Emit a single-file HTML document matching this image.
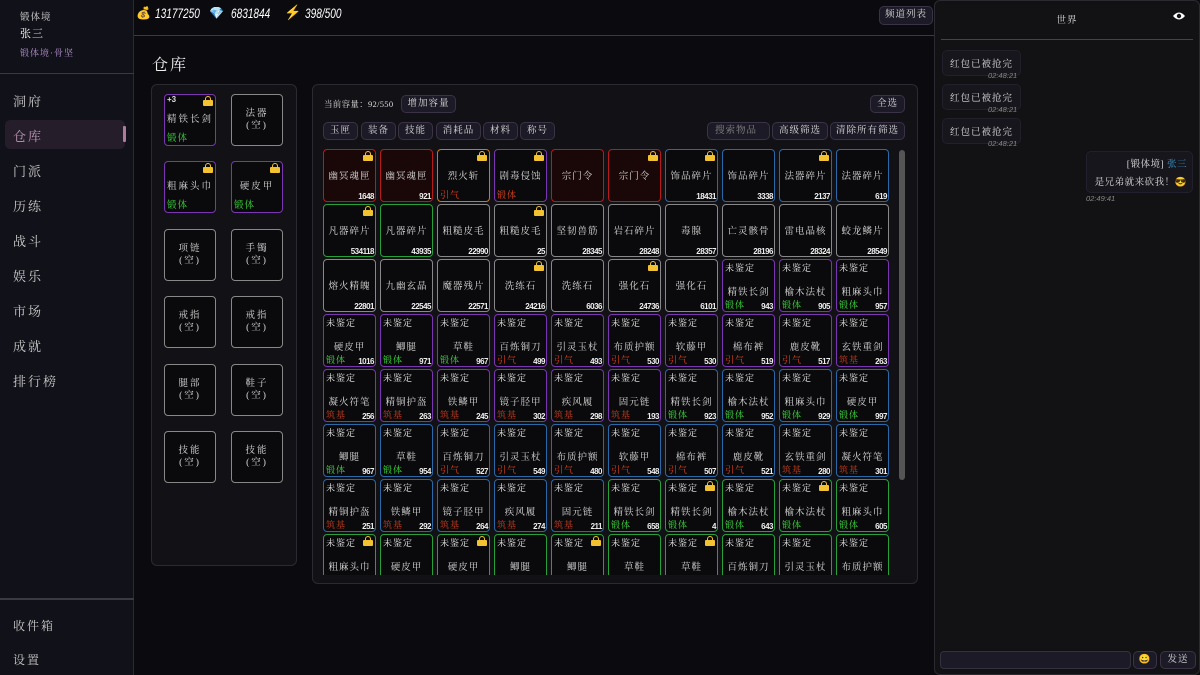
<!DOCTYPE html>
<html><head><meta charset="utf-8"><style>
*{box-sizing:border-box;margin:0;padding:0}
body{width:1200px;height:675px;overflow:hidden;background:#0b0b0f;font-family:"Liberation Serif","Noto Serif CJK SC",serif;color:#ddd;position:relative}
.abs{position:absolute}
#side{left:0;top:0;width:134px;height:675px;background:#111119;border-right:1px solid #2a2a33}
.nav{position:absolute;left:13px;font-size:13px;color:#c8c8c8;letter-spacing:2px}
#chat{left:934px;top:0;width:266px;height:675px;background:#121215;border:1px solid #2a2a30;border-radius:6px}
.btn{position:absolute;background:#1c1a26;border:1px solid #3a3345;border-radius:5px;font-size:9.5px;color:#ddd;text-align:center;letter-spacing:1px;white-space:nowrap}
.panel{position:absolute;background:#111116;border:1px solid #2a2a32;border-radius:6px}
.eq{position:absolute;width:52px;height:52px;border:1.5px solid #888;border-radius:4px;background:#0a0a0c;font-size:9.5px;text-align:center;color:#ddd;display:flex;align-items:center;justify-content:center;line-height:1.3;letter-spacing:2px}
.eq.p{border-color:#7a35b0}
#grid{left:323px;top:149px;width:568px;height:426px;overflow:hidden}
.c{position:absolute;width:53px;height:53px;border:1.5px solid #888;border-radius:4px;background:#0a0a0c;font-size:9px}
.c .n{position:absolute;left:0;right:0;top:18px;text-align:center;color:#ddd;font-size:9.5px;letter-spacing:1px;white-space:nowrap}
.c .u{position:absolute;left:2px;top:1px;color:#eee;letter-spacing:1px}
.c .u+.n{top:24px}
.c .q{position:absolute;right:1px;bottom:0;font-size:8px;font-family:"Liberation Sans",sans-serif;font-weight:bold;color:#eee;letter-spacing:-.5px}
.c .lv{position:absolute;left:2px;bottom:0;font-size:9px;letter-spacing:1px}
.g1{color:#3ddc3d}.g2{color:#e8421a}.g3{color:#d2401e}
.lk{position:absolute;right:2px;top:1px;width:10px;height:10px}
.lk::before{content:"";position:absolute;left:2px;top:0;width:6px;height:6px;border:1.5px solid #f2c230;border-bottom:none;border-radius:3px 3px 0 0;box-sizing:border-box}
.lk::after{content:"";position:absolute;left:0;top:4px;width:10px;height:6px;background:#f2c230;border-radius:1px}
.r{border-color:#b81a1a;background:#1a0808}.o{border-color:#c87a20}.p{border-color:#7a35b0}.b{border-color:#2a68a8}.g{border-color:#27a03a}
.bub{position:absolute;background:#17161c;border:1px solid #22202a;border-radius:5px;font-size:9.5px;color:#ddd;padding:5px 7px;letter-spacing:1px;white-space:nowrap}
.ts{position:absolute;font-size:7.5px;color:#888;font-family:"Liberation Sans",sans-serif;font-style:italic}
.num{position:absolute;top:5px;font-size:14px;font-style:italic;color:#fff;font-family:'Liberation Sans',sans-serif;transform:scaleX(.72);transform-origin:left top}
</style></head><body>
<div id="side" class="abs">
<div class="abs" style="left:20px;top:9px;font-size:9.5px;color:#ddd;letter-spacing:1px">锻体境</div>
<div class="abs" style="left:20px;top:25px;font-size:11px;color:#fff;letter-spacing:1px">张三</div>
<div class="abs" style="left:20px;top:46px;font-size:9px;color:#b090c8;letter-spacing:1px">锻体境·骨坚</div>
<div class="abs" style="left:0;top:73px;width:134px;height:1px;background:#3a3a44"></div>
<div class="abs" style="left:5px;top:120px;width:120px;height:29px;background:#251d2a;border-radius:5px"></div>
<div class="abs" style="left:123px;top:126px;width:3px;height:16px;background:#b07aa0;border-radius:1px"></div>
<div class="nav" style="top:91px">洞府</div>
<div class="nav" style="top:126px;color:#c09ab8">仓库</div>
<div class="nav" style="top:161px">门派</div>
<div class="nav" style="top:196px">历练</div>
<div class="nav" style="top:231px">战斗</div>
<div class="nav" style="top:266px">娱乐</div>
<div class="nav" style="top:301px">市场</div>
<div class="nav" style="top:336px">成就</div>
<div class="nav" style="top:371px">排行榜</div>
<div class="abs" style="left:0;top:598px;width:134px;height:2px;background:#3a3a44"></div>
<div class="nav" style="top:617px;font-size:12px">收件箱</div>
<div class="nav" style="top:651px;font-size:12px">设置</div>
</div>
<div class="abs" style="left:134px;top:35px;width:800px;height:1px;background:#3a3a44"></div>
<div class="abs" style="left:136px;top:6px;font-size:12px">💰</div>
<div class="num" style="left:155px">13177250</div>
<div class="abs" style="left:209px;top:6px;font-size:12px">💎</div>
<div class="num" style="left:231px">6831844</div>
<div class="abs" style="left:284px;top:5px;font-size:14px;color:#f5c020">⚡</div>
<div class="num" style="left:305px">398/500</div>
<div class="btn" style="left:879px;top:6px;width:54px;height:19px;line-height:17px">频道列表</div>
<div class="abs" style="left:152px;top:52px;font-size:16px;color:#eee;letter-spacing:2px">仓库</div>

<div class="panel" style="left:151px;top:84px;width:146px;height:482px"></div>
<div class="eq p" style="left:164px;top:94px"><span style="position:absolute;left:2px;top:0;font-size:8px;font-family:'Liberation Sans';font-weight:bold;letter-spacing:0">+3</span><span class="lk"></span>精铁长剑<span class="g1" style="position:absolute;left:2px;bottom:0;letter-spacing:1px">锻体</span></div>
<div class="eq" style="left:231px;top:94px">法器<br>(空)</div>
<div class="eq p" style="left:164px;top:161px"><span class="lk"></span>粗麻头巾<span class="g1" style="position:absolute;left:2px;bottom:0;letter-spacing:1px">锻体</span></div>
<div class="eq p" style="left:231px;top:161px"><span class="lk"></span>硬皮甲<span class="g1" style="position:absolute;left:2px;bottom:0;letter-spacing:1px">锻体</span></div>
<div class="eq" style="left:164px;top:229px">项链<br>(空)</div>
<div class="eq" style="left:231px;top:229px">手镯<br>(空)</div>
<div class="eq" style="left:164px;top:296px">戒指<br>(空)</div>
<div class="eq" style="left:231px;top:296px">戒指<br>(空)</div>
<div class="eq" style="left:164px;top:364px">腿部<br>(空)</div>
<div class="eq" style="left:231px;top:364px">鞋子<br>(空)</div>
<div class="eq" style="left:164px;top:431px">技能<br>(空)</div>
<div class="eq" style="left:231px;top:431px">技能<br>(空)</div>

<div class="panel" style="left:312px;top:84px;width:606px;height:500px"></div>
<div class="abs" style="left:324px;top:98px;font-size:8.5px;letter-spacing:.3px;white-space:nowrap">当前容量：92/550</div>
<div class="btn" style="left:401px;top:95px;width:55px;height:18px;line-height:16px">增加容量</div>
<div class="btn" style="left:870px;top:95px;width:35px;height:18px;line-height:16px">全选</div>
<div class="btn" style="left:323px;top:122px;width:35px;height:18px;line-height:16px">玉匣</div>
<div class="btn" style="left:361px;top:122px;width:35px;height:18px;line-height:16px">装备</div>
<div class="btn" style="left:398px;top:122px;width:35px;height:18px;line-height:16px">技能</div>
<div class="btn" style="left:436px;top:122px;width:45px;height:18px;line-height:16px">消耗品</div>
<div class="btn" style="left:483px;top:122px;width:35px;height:18px;line-height:16px">材料</div>
<div class="btn" style="left:520px;top:122px;width:35px;height:18px;line-height:16px">称号</div>
<div class="btn" style="left:707px;top:122px;width:63px;height:18px;line-height:16px;color:#888;text-align:left;padding-left:7px">搜索物品</div>
<div class="btn" style="left:772px;top:122px;width:56px;height:18px;line-height:16px">高级筛选</div>
<div class="btn" style="left:830px;top:122px;width:75px;height:18px;line-height:16px">清除所有筛选</div>
<div class="abs" style="left:899px;top:150px;width:6px;height:330px;background:#555;border-radius:3px"></div>

<div id="grid" class="abs">
<div class="c r" style="left:0;top:0"><span class="lk"></span><span class="n">幽冥魂匣</span><span class="q">1648</span></div>
<div class="c r" style="left:57px;top:0"><span class="n">幽冥魂匣</span><span class="q">921</span></div>
<div class="c o" style="left:114px;top:0"><span class="lk"></span><span class="n">烈火斩</span><span class="lv g2">引气</span></div>
<div class="c p" style="left:171px;top:0"><span class="lk"></span><span class="n">剧毒侵蚀</span><span class="lv g2">锻体</span></div>
<div class="c r" style="left:228px;top:0"><span class="n">宗门令</span></div>
<div class="c r" style="left:285px;top:0"><span class="lk"></span><span class="n">宗门令</span></div>
<div class="c b" style="left:342px;top:0"><span class="lk"></span><span class="n">饰品碎片</span><span class="q">18431</span></div>
<div class="c b" style="left:399px;top:0"><span class="n">饰品碎片</span><span class="q">3338</span></div>
<div class="c b" style="left:456px;top:0"><span class="lk"></span><span class="n">法器碎片</span><span class="q">2137</span></div>
<div class="c b" style="left:513px;top:0"><span class="n">法器碎片</span><span class="q">619</span></div>
<div class="c g" style="left:0;top:55px"><span class="lk"></span><span class="n">凡器碎片</span><span class="q">534118</span></div>
<div class="c g" style="left:57px;top:55px"><span class="n">凡器碎片</span><span class="q">43935</span></div>
<div class="c" style="left:114px;top:55px"><span class="n">粗糙皮毛</span><span class="q">22990</span></div>
<div class="c" style="left:171px;top:55px"><span class="lk"></span><span class="n">粗糙皮毛</span><span class="q">25</span></div>
<div class="c" style="left:228px;top:55px"><span class="n">坚韧兽筋</span><span class="q">28345</span></div>
<div class="c" style="left:285px;top:55px"><span class="n">岩石碎片</span><span class="q">28248</span></div>
<div class="c" style="left:342px;top:55px"><span class="n">毒腺</span><span class="q">28357</span></div>
<div class="c" style="left:399px;top:55px"><span class="n">亡灵骸骨</span><span class="q">28196</span></div>
<div class="c" style="left:456px;top:55px"><span class="n">雷电晶核</span><span class="q">28324</span></div>
<div class="c" style="left:513px;top:55px"><span class="n">蛟龙鳞片</span><span class="q">28549</span></div>
<div class="c" style="left:0;top:110px"><span class="n">熔火精魄</span><span class="q">22801</span></div>
<div class="c" style="left:57px;top:110px"><span class="n">九幽玄晶</span><span class="q">22545</span></div>
<div class="c" style="left:114px;top:110px"><span class="n">魔器残片</span><span class="q">22571</span></div>
<div class="c" style="left:171px;top:110px"><span class="lk"></span><span class="n">洗练石</span><span class="q">24216</span></div>
<div class="c" style="left:228px;top:110px"><span class="n">洗练石</span><span class="q">6036</span></div>
<div class="c" style="left:285px;top:110px"><span class="lk"></span><span class="n">强化石</span><span class="q">24736</span></div>
<div class="c" style="left:342px;top:110px"><span class="n">强化石</span><span class="q">6101</span></div>
<div class="c p" style="left:399px;top:110px"><span class="u">未鉴定</span><span class="n">精铁长剑</span><span class="lv g1">锻体</span><span class="q">943</span></div>
<div class="c p" style="left:456px;top:110px"><span class="u">未鉴定</span><span class="n">榆木法杖</span><span class="lv g1">锻体</span><span class="q">905</span></div>
<div class="c p" style="left:513px;top:110px"><span class="u">未鉴定</span><span class="n">粗麻头巾</span><span class="lv g1">锻体</span><span class="q">957</span></div>
<div class="c p" style="left:0;top:165px"><span class="u">未鉴定</span><span class="n">硬皮甲</span><span class="lv g1">锻体</span><span class="q">1016</span></div>
<div class="c p" style="left:57px;top:165px"><span class="u">未鉴定</span><span class="n">鲫腿</span><span class="lv g1">锻体</span><span class="q">971</span></div>
<div class="c p" style="left:114px;top:165px"><span class="u">未鉴定</span><span class="n">草鞋</span><span class="lv g1">锻体</span><span class="q">967</span></div>
<div class="c p" style="left:171px;top:165px"><span class="u">未鉴定</span><span class="n">百炼铜刀</span><span class="lv g2">引气</span><span class="q">499</span></div>
<div class="c p" style="left:228px;top:165px"><span class="u">未鉴定</span><span class="n">引灵玉杖</span><span class="lv g2">引气</span><span class="q">493</span></div>
<div class="c p" style="left:285px;top:165px"><span class="u">未鉴定</span><span class="n">布质护额</span><span class="lv g2">引气</span><span class="q">530</span></div>
<div class="c p" style="left:342px;top:165px"><span class="u">未鉴定</span><span class="n">软藤甲</span><span class="lv g2">引气</span><span class="q">530</span></div>
<div class="c p" style="left:399px;top:165px"><span class="u">未鉴定</span><span class="n">棉布裤</span><span class="lv g2">引气</span><span class="q">519</span></div>
<div class="c p" style="left:456px;top:165px"><span class="u">未鉴定</span><span class="n">鹿皮靴</span><span class="lv g2">引气</span><span class="q">517</span></div>
<div class="c p" style="left:513px;top:165px"><span class="u">未鉴定</span><span class="n">玄铁重剑</span><span class="lv g3">筑基</span><span class="q">263</span></div>
<div class="c p" style="left:0;top:220px"><span class="u">未鉴定</span><span class="n">凝火符笔</span><span class="lv g3">筑基</span><span class="q">256</span></div>
<div class="c p" style="left:57px;top:220px"><span class="u">未鉴定</span><span class="n">精铜护盔</span><span class="lv g3">筑基</span><span class="q">263</span></div>
<div class="c p" style="left:114px;top:220px"><span class="u">未鉴定</span><span class="n">铁鳞甲</span><span class="lv g3">筑基</span><span class="q">245</span></div>
<div class="c p" style="left:171px;top:220px"><span class="u">未鉴定</span><span class="n">镜子胫甲</span><span class="lv g3">筑基</span><span class="q">302</span></div>
<div class="c p" style="left:228px;top:220px"><span class="u">未鉴定</span><span class="n">疾风履</span><span class="lv g3">筑基</span><span class="q">298</span></div>
<div class="c p" style="left:285px;top:220px"><span class="u">未鉴定</span><span class="n">固元链</span><span class="lv g3">筑基</span><span class="q">193</span></div>
<div class="c b" style="left:342px;top:220px"><span class="u">未鉴定</span><span class="n">精铁长剑</span><span class="lv g1">锻体</span><span class="q">923</span></div>
<div class="c b" style="left:399px;top:220px"><span class="u">未鉴定</span><span class="n">榆木法杖</span><span class="lv g1">锻体</span><span class="q">952</span></div>
<div class="c b" style="left:456px;top:220px"><span class="u">未鉴定</span><span class="n">粗麻头巾</span><span class="lv g1">锻体</span><span class="q">929</span></div>
<div class="c b" style="left:513px;top:220px"><span class="u">未鉴定</span><span class="n">硬皮甲</span><span class="lv g1">锻体</span><span class="q">997</span></div>
<div class="c b" style="left:0;top:275px"><span class="u">未鉴定</span><span class="n">鲫腿</span><span class="lv g1">锻体</span><span class="q">967</span></div>
<div class="c b" style="left:57px;top:275px"><span class="u">未鉴定</span><span class="n">草鞋</span><span class="lv g1">锻体</span><span class="q">954</span></div>
<div class="c b" style="left:114px;top:275px"><span class="u">未鉴定</span><span class="n">百炼铜刀</span><span class="lv g2">引气</span><span class="q">527</span></div>
<div class="c b" style="left:171px;top:275px"><span class="u">未鉴定</span><span class="n">引灵玉杖</span><span class="lv g2">引气</span><span class="q">549</span></div>
<div class="c b" style="left:228px;top:275px"><span class="u">未鉴定</span><span class="n">布质护额</span><span class="lv g2">引气</span><span class="q">480</span></div>
<div class="c b" style="left:285px;top:275px"><span class="u">未鉴定</span><span class="n">软藤甲</span><span class="lv g2">引气</span><span class="q">548</span></div>
<div class="c b" style="left:342px;top:275px"><span class="u">未鉴定</span><span class="n">棉布裤</span><span class="lv g2">引气</span><span class="q">507</span></div>
<div class="c b" style="left:399px;top:275px"><span class="u">未鉴定</span><span class="n">鹿皮靴</span><span class="lv g2">引气</span><span class="q">521</span></div>
<div class="c b" style="left:456px;top:275px"><span class="u">未鉴定</span><span class="n">玄铁重剑</span><span class="lv g3">筑基</span><span class="q">280</span></div>
<div class="c b" style="left:513px;top:275px"><span class="u">未鉴定</span><span class="n">凝火符笔</span><span class="lv g3">筑基</span><span class="q">301</span></div>
<div class="c b" style="left:0;top:330px"><span class="u">未鉴定</span><span class="n">精铜护盔</span><span class="lv g3">筑基</span><span class="q">251</span></div>
<div class="c b" style="left:57px;top:330px"><span class="u">未鉴定</span><span class="n">铁鳞甲</span><span class="lv g3">筑基</span><span class="q">292</span></div>
<div class="c b" style="left:114px;top:330px"><span class="u">未鉴定</span><span class="n">镜子胫甲</span><span class="lv g3">筑基</span><span class="q">264</span></div>
<div class="c b" style="left:171px;top:330px"><span class="u">未鉴定</span><span class="n">疾风履</span><span class="lv g3">筑基</span><span class="q">274</span></div>
<div class="c b" style="left:228px;top:330px"><span class="u">未鉴定</span><span class="n">固元链</span><span class="lv g3">筑基</span><span class="q">211</span></div>
<div class="c g" style="left:285px;top:330px"><span class="u">未鉴定</span><span class="n">精铁长剑</span><span class="lv g1">锻体</span><span class="q">658</span></div>
<div class="c g" style="left:342px;top:330px"><span class="lk"></span><span class="u">未鉴定</span><span class="n">精铁长剑</span><span class="lv g1">锻体</span><span class="q">4</span></div>
<div class="c g" style="left:399px;top:330px"><span class="u">未鉴定</span><span class="n">榆木法杖</span><span class="lv g1">锻体</span><span class="q">643</span></div>
<div class="c g" style="left:456px;top:330px"><span class="lk"></span><span class="u">未鉴定</span><span class="n">榆木法杖</span><span class="lv g1">锻体</span></div>
<div class="c g" style="left:513px;top:330px"><span class="u">未鉴定</span><span class="n">粗麻头巾</span><span class="lv g1">锻体</span><span class="q">605</span></div>
<div class="c g" style="left:0;top:385px"><span class="lk"></span><span class="u">未鉴定</span><span class="n">粗麻头巾</span></div>
<div class="c g" style="left:57px;top:385px"><span class="u">未鉴定</span><span class="n">硬皮甲</span></div>
<div class="c g" style="left:114px;top:385px"><span class="lk"></span><span class="u">未鉴定</span><span class="n">硬皮甲</span></div>
<div class="c g" style="left:171px;top:385px"><span class="u">未鉴定</span><span class="n">鲫腿</span></div>
<div class="c g" style="left:228px;top:385px"><span class="lk"></span><span class="u">未鉴定</span><span class="n">鲫腿</span></div>
<div class="c g" style="left:285px;top:385px"><span class="u">未鉴定</span><span class="n">草鞋</span></div>
<div class="c g" style="left:342px;top:385px"><span class="lk"></span><span class="u">未鉴定</span><span class="n">草鞋</span></div>
<div class="c g" style="left:399px;top:385px"><span class="u">未鉴定</span><span class="n">百炼铜刀</span></div>
<div class="c g" style="left:456px;top:385px"><span class="u">未鉴定</span><span class="n">引灵玉杖</span></div>
<div class="c g" style="left:513px;top:385px"><span class="u">未鉴定</span><span class="n">布质护额</span></div>
</div>

<div id="chat" class="abs">
<div class="abs" style="left:0;width:264px;top:11px;text-align:center;font-size:9.5px;letter-spacing:1px">世界</div>
<svg class="abs" style="left:237px;top:10px" width="14" height="10" viewBox="0 0 14 10"><path d="M1 5Q7-2 13 5Q7 12 1 5Z" fill="#fff"/><circle cx="7" cy="5" r="2.2" fill="#121215"/></svg>
<div class="abs" style="left:6px;top:38px;width:252px;height:1px;background:#44444c"></div>
<div class="bub" style="left:7px;top:49px">红包已被抢完</div>
<div class="ts" style="left:53px;top:70px">02:48:21</div>
<div class="bub" style="left:7px;top:83px">红包已被抢完</div>
<div class="ts" style="left:53px;top:104px">02:48:21</div>
<div class="bub" style="left:7px;top:117px">红包已被抢完</div>
<div class="ts" style="left:53px;top:138px">02:48:21</div>
<div class="bub" style="left:151px;top:150px;width:107px;height:42px;text-align:right;line-height:1.9;padding:4px 5px;letter-spacing:.5px">[锻体境] <span style="color:#3aa0d8">张三</span><br>是兄弟就来砍我！😎</div>
<div class="ts" style="left:151px;top:193px">02:49:41</div>
<div class="abs" style="left:5px;top:650px;width:191px;height:18px;background:#1b1a26;border:1px solid #34303e;border-radius:4px"></div>
<div class="btn" style="left:198px;top:650px;width:24px;height:18px;line-height:16px">😀</div>
<div class="btn" style="left:225px;top:650px;width:36px;height:18px;line-height:16px">发送</div>
</div>
</body></html>
